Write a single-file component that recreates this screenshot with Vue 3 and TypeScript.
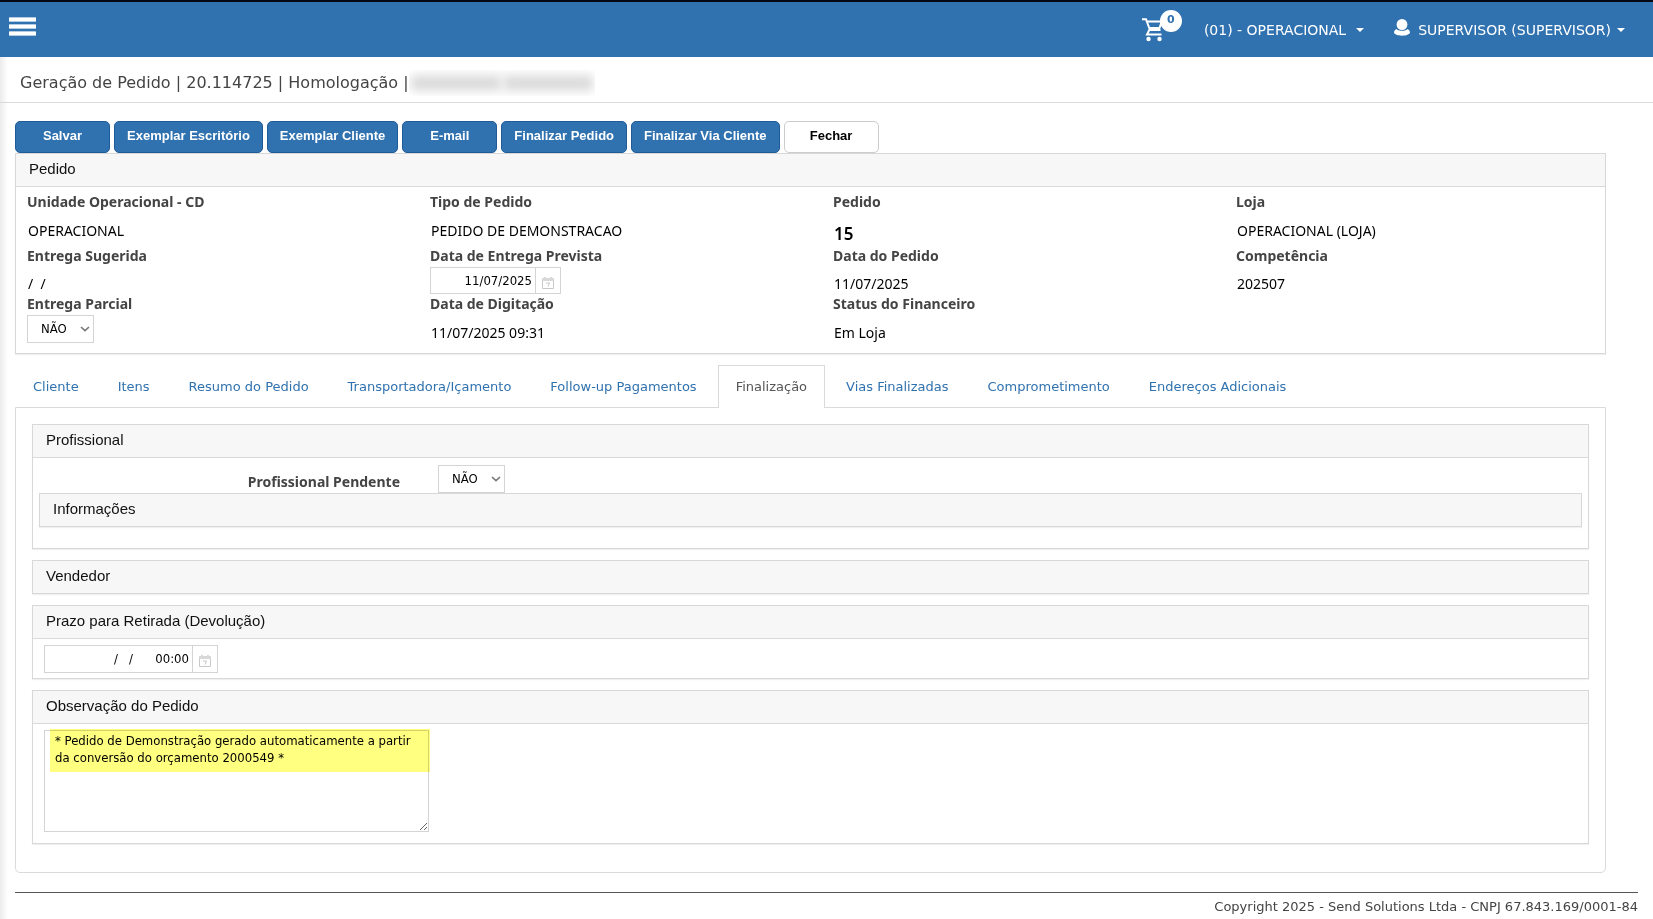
<script setup lang="ts">
import { ref } from 'vue'

interface Field {
  label: string
  kind: 'text' | 'strong' | 'date' | 'select'
  value: string
}

const actions: string[] = [
  'Salvar',
  'Exemplar Escritório',
  'Exemplar Cliente',
  'E-mail',
  'Finalizar Pedido',
  'Finalizar Via Cliente',
]

const rows: Field[][] = [
  [
    { label: 'Unidade Operacional - CD', kind: 'text', value: 'OPERACIONAL' },
    { label: 'Tipo de Pedido', kind: 'text', value: 'PEDIDO DE DEMONSTRACAO' },
    { label: 'Pedido', kind: 'strong', value: '15' },
    { label: 'Loja', kind: 'text', value: 'OPERACIONAL (LOJA)' },
  ],
  [
    { label: 'Entrega Sugerida', kind: 'text', value: '/  /' },
    { label: 'Data de Entrega Prevista', kind: 'date', value: '11/07/2025' },
    { label: 'Data do Pedido', kind: 'text', value: '11/07/2025' },
    { label: 'Competência', kind: 'text', value: '202507' },
  ],
  [
    { label: 'Entrega Parcial', kind: 'select', value: 'NÃO' },
    { label: 'Data de Digitação', kind: 'text', value: '11/07/2025 09:31' },
    { label: 'Status do Financeiro', kind: 'text', value: 'Em Loja' },
  ],
]

const tabs: string[] = [
  'Cliente',
  'Itens',
  'Resumo do Pedido',
  'Transportadora/Içamento',
  'Follow-up Pagamentos',
  'Finalização',
  'Vias Finalizadas',
  'Comprometimento',
  'Endereços Adicionais',
]
const activeTab = ref('Finalização')

const deliveryDate = ref('11/07/2025')
const partialDelivery = ref('NÃO')
const pendingProfessional = ref('NÃO')
const pickupDeadline = ref('/   /      00:00')
const notes = ref(
  '* Pedido de Demonstração gerado automaticamente a partir da conversão do orçamento 2000549 *',
)
</script>

<template>
  <div class="page">
    <header class="topbar">
      <button class="menu" type="button" aria-label="Menu">
        <span></span><span></span><span></span>
      </button>
      <nav class="topnav">
        <a class="cart" href="#" aria-label="Carrinho">
          <svg width="24" height="25" viewBox="0 0 24 25" fill="none" stroke="#fff" stroke-width="2">
            <path d="M0 2.2H4L8 13H18.5M4.8 4.5H19M19.5 5L17.5 11H7.3M7.5 12.5L5 17.5H19.5" />
            <circle cx="6.5" cy="22" r="2.2" fill="#fff" stroke="none" />
            <circle cx="17.5" cy="22" r="2.2" fill="#fff" stroke="none" />
          </svg>
          <span class="badge">0</span>
        </a>
        <a class="navlink unit" href="#">(01) - OPERACIONAL<i class="caret"></i></a>
        <a class="navlink user" href="#">
          <svg width="16" height="17" viewBox="0 0 16 17" fill="#fff">
            <ellipse cx="8" cy="5.5" rx="5.4" ry="5.5" />
            <path d="M2.4 10C4 12.4 12 12.4 13.6 10C15 10.7 16 12 16 13.6C15.5 17.7 0.5 17.7 0 13.6C0 12 1 10.7 2.4 10Z" />
          </svg>
          SUPERVISOR (SUPERVISOR)<i class="caret"></i>
        </a>
      </nav>
    </header>

    <div class="titlebar">
      <h1>Geração de Pedido | 20.114725 | Homologação |</h1>
      <span class="redacted" aria-hidden="true"><i></i><i></i></span>
    </div>

    <main>
      <div class="actions">
        <button v-for="a in actions" :key="a" class="btn primary" type="button">{{ a }}</button>
        <button class="btn" type="button">Fechar</button>
      </div>

      <section class="panel order">
        <h2>Pedido</h2>
        <div class="order-body">
          <div v-for="(row, r) in rows" :key="r" class="row" :class="'row-' + r">
            <div v-for="f in row" :key="f.label" class="field">
              <template v-if="f.kind === 'date'">
                <label for="delivery">{{ f.label }}</label>
                <div class="dategroup">
                  <input id="delivery" v-model="deliveryDate" type="text" />
                  <button type="button" aria-label="Abrir calendário">
                    <svg width="12" height="12" viewBox="0 0 12 12">
                      <path d="M2 0H4V1H8V0H10V1H12V4H0V1H2Z" fill="#d8d8d8" />
                      <path d="M.5 4V11.5H11.5V4" fill="none" stroke="#c8c8c8" />
                      <path d="M4 6H7.5L6 9.5" fill="none" stroke="#c8c8c8" />
                    </svg>
                  </button>
                </div>
              </template>
              <template v-else-if="f.kind === 'select'">
                <label for="partial">{{ f.label }}</label>
                <div class="selectbox">
                  <select id="partial" v-model="partialDelivery">
                    <option>NÃO</option>
                    <option>SIM</option>
                  </select>
                  <svg width="10" height="6" viewBox="0 0 10 6" fill="none" stroke="#777" stroke-width="1.6"><path d="M1 1L5 4.6L9 1" /></svg>
                </div>
              </template>
              <template v-else>
                <span class="label">{{ f.label }}</span>
                <span class="value" :class="f.kind">{{ f.value }}</span>
              </template>
            </div>
          </div>
        </div>
      </section>

      <nav class="tabs" role="tablist">
        <button
          v-for="t in tabs"
          :key="t"
          type="button"
          role="tab"
          class="tab"
          :class="{ active: t === activeTab }"
          :aria-selected="t === activeTab"
          @click="activeTab = t"
        >
          {{ t }}
        </button>
      </nav>

      <div class="tabpane" role="tabpanel">
        <section class="panel">
          <h2>Profissional</h2>
          <div class="professional">
            <div class="formline">
              <label for="pending">Profissional Pendente</label>
              <div class="selectbox">
                <select id="pending" v-model="pendingProfessional">
                  <option>NÃO</option>
                  <option>SIM</option>
                </select>
                <svg width="10" height="6" viewBox="0 0 10 6" fill="none" stroke="#777" stroke-width="1.6"><path d="M1 1L5 4.6L9 1" /></svg>
              </div>
            </div>
            <section class="panel closed">
              <h2>Informações</h2>
            </section>
          </div>
        </section>

        <section class="panel closed">
          <h2>Vendedor</h2>
        </section>

        <section class="panel">
          <h2 id="deadline-title">Prazo para Retirada (Devolução)</h2>
          <div class="deadline">
            <div class="dategroup wide">
              <input v-model="pickupDeadline" type="text" aria-labelledby="deadline-title" />
              <button type="button" aria-label="Abrir calendário">
                <svg width="12" height="12" viewBox="0 0 12 12">
                  <path d="M2 0H4V1H8V0H10V1H12V4H0V1H2Z" fill="#d8d8d8" />
                  <path d="M.5 4V11.5H11.5V4" fill="none" stroke="#c8c8c8" />
                  <path d="M4 6H7.5L6 9.5" fill="none" stroke="#c8c8c8" />
                </svg>
              </button>
            </div>
          </div>
        </section>

        <section class="panel">
          <h2 id="notes-title">Observação do Pedido</h2>
          <div class="notes">
            <div class="notebox">
              <textarea v-model="notes" aria-labelledby="notes-title" spellcheck="false"></textarea>
              <span class="marker"></span>
            </div>
          </div>
        </section>
      </div>

      <footer>Copyright 2025 - Send Solutions Ltda - CNPJ 67.843.169/0001-84</footer>
    </main>
  </div>
</template>

<style>
body {
  margin: 0;
  background: #fff;
}
</style>

<style scoped>
* {
  box-sizing: border-box;
}
.page {
  min-height: 100vh;
  font-family: Verdana, 'DejaVu Sans', sans-serif;
  color: #444;
  background: linear-gradient(to right, #ececec, #fff 8px);
}
.topbar {
  height: 57px;
  display: flex;
  justify-content: space-between;
  background: #3072af;
  border-top: 2px solid #020814;
  padding: 0 28px 0 9px;
}
.menu {
  display: flex;
  flex-direction: column;
  gap: 2px;
  align-self: flex-start;
  margin-top: 15px;
  padding: 0;
  width: 27px;
  border: 0;
  background: none;
}
.menu span {
  height: 5px;
  border-radius: 1px;
  background: #fff;
  border-top: 1px solid #b4cce3;
  border-bottom: 1px solid #b4cce3;
}
.topnav {
  display: flex;
  align-items: center;
}
.cart {
  position: relative;
  display: block;
  width: 40px;
  height: 25px;
  margin-right: 22px;
}
.cart svg {
  display: block;
}
.badge {
  position: absolute;
  left: 18px;
  top: -7px;
  width: 22px;
  height: 22px;
  border-radius: 50%;
  background: #fff;
  color: #3072af;
  font: bold 11px/20px 'DejaVu Sans', sans-serif;
  text-align: center;
}
.navlink {
  display: flex;
  align-items: center;
  color: #fff;
  text-decoration: none;
  font-size: 14px;
  line-height: 20px;
}
.unit {
  margin-right: 30px;
}
.unit .caret {
  margin-left: 10px;
}
.user svg {
  margin: 0 8px 4px 0;
}
.caret {
  margin-left: 6px;
  border: 4px solid transparent;
  border-top-color: #fff;
  border-bottom: 0;
}
.titlebar {
  height: 46px;
  display: flex;
  align-items: center;
  padding: 6px 20px 0;
  border-bottom: 1px solid #dadada;
}
h1 {
  margin: 0;
  font-size: 16px;
  font-weight: normal;
  line-height: 24px;
}
.redacted {
  display: flex;
  gap: 2px;
  width: 186px;
  height: 26px;
  padding: 5px 2px;
  overflow: hidden;
}
.redacted i {
  flex: 1;
  background: #dcdcdc;
  filter: blur(5px);
}
main {
  padding: 18px 15px 0;
}
.actions {
  display: flex;
  gap: 4px;
}
.btn {
  min-width: 95px;
  height: 32px;
  padding: 0 12px 3px;
  border: 1px solid #ccc;
  border-radius: 5px;
  background: #fff;
  color: #000;
  font: bold 13px/18px Arial, 'Liberation Sans', sans-serif;
}
.primary {
  background: #3072af;
  border-color: #1f5c97;
  color: #fff;
}
.panel {
  border: 1px solid #d8d8d8;
  background: #fff;
  box-shadow: 0 1px 1px #f0f0f0;
}
.panel h2 {
  margin: 0;
  height: 33px;
  padding: 0 13px 3px;
  display: flex;
  align-items: center;
  background: #f7f7f7;
  border-bottom: 1px solid #dadada;
  color: #111;
  font: 15px/20px Arial, 'Liberation Sans', sans-serif;
}
.panel.closed h2 {
  height: 32px;
  border-bottom: 0;
}
.order,
.tabs,
.tabpane {
  margin-right: 32px;
}
.order-body {
  padding: 5px 0 9px 11px;
}
.row {
  display: grid;
  grid-template-columns: 403fr 403fr 403fr 369fr;
  min-height: 50px;
}
.row-0 {
  min-height: 54px;
}
.row-1 {
  min-height: 48px;
}
label,
.label {
  display: block;
  color: #444;
  font: bold 14px/20px 'Trebuchet MS', 'Noto Sans', sans-serif;
}
.value {
  display: block;
  padding: 9px 1px 0;
  color: #000;
  white-space: pre;
  font: 14px/20px 'Trebuchet MS', 'Noto Sans', sans-serif;
}
.row-1 .value {
  padding-top: 8px;
}
.value.strong {
  padding-top: 12px;
  font-size: 17px;
  font-weight: 600;
}
.field .dategroup,
.field .selectbox {
  margin-top: 1px;
}
.dategroup {
  display: flex;
  width: 131px;
  height: 27px;
}
.dategroup input {
  flex: 1;
  min-width: 0;
  padding: 0 3px;
  border: 1px solid #d4d4d4;
  text-align: right;
  white-space: pre;
  color: #000;
  font: 13px/18px Tahoma, 'DejaVu Sans Condensed', sans-serif;
}
.dategroup button {
  width: 25px;
  padding: 4px 0 0;
  border: 1px solid #d4d4d4;
  border-left: 0;
  background: #fff;
}
.dategroup svg {
  display: block;
  margin: 0 auto;
}
.wide {
  width: 174px;
  height: 28px;
}
.selectbox {
  position: relative;
  width: 67px;
  height: 28px;
}
.selectbox select {
  appearance: none;
  width: 100%;
  height: 100%;
  padding: 0 13px;
  border: 1px solid #d4d4d4;
  border-radius: 0;
  background: #fff;
  color: #000;
  font: 13px/18px Tahoma, 'DejaVu Sans Condensed', sans-serif;
}
.selectbox svg {
  position: absolute;
  right: 4px;
  top: 11px;
  pointer-events: none;
}
.tabs {
  display: flex;
  gap: 3px;
  margin-top: 11px;
}
.tab {
  height: 42px;
  padding: 0 17px;
  border: 1px solid transparent;
  border-bottom: 0;
  background: none;
  color: #3072af;
  font: 13px/20px Verdana, 'DejaVu Sans', sans-serif;
}
.tab.active {
  position: relative;
  height: 43px;
  margin-bottom: -1px;
  border-color: #dadada;
  background: #fff;
  color: #555;
}
.tabpane {
  display: flex;
  flex-direction: column;
  gap: 11px;
  padding: 16px 16px 28px;
  border: 1px solid #dadada;
  border-radius: 0 0 5px 5px;
  background: #fff;
}
.tabpane h2 {
  padding-bottom: 2px;
}
.professional {
  padding: 6px 6px 21px;
}
.formline {
  display: flex;
  align-items: center;
  gap: 38px;
  height: 29px;
}
.formline label {
  width: 361px;
  text-align: right;
  padding-top: 7px;
}
.deadline {
  padding: 6px 11px 5px;
}
.notes {
  padding: 6px 11px 11px;
}
.notebox {
  position: relative;
  width: 385px;
}
textarea {
  display: block;
  width: 100%;
  height: 102px;
  padding: 1px 10px;
  border: 1px solid #d4d4d4;
  color: #000;
  background: #fff;
  font: 13px/17px Tahoma, 'DejaVu Sans Condensed', sans-serif;
}
.marker {
  position: absolute;
  left: 6px;
  right: -1px;
  top: -1px;
  height: 43px;
  background: #ffff80;
  mix-blend-mode: multiply;
  pointer-events: none;
}
footer {
  margin-top: 19px;
  padding: 4px 0 0;
  border-top: 1px solid #555;
  text-align: right;
  font-size: 13px;
  line-height: 20px;
}
</style>
